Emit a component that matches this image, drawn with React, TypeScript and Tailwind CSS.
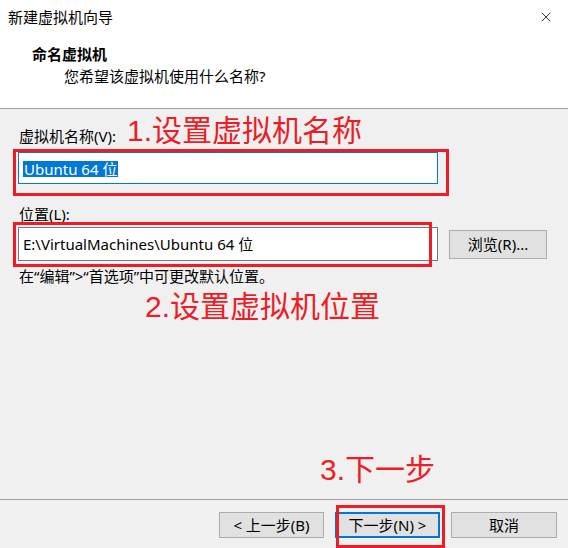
import { X } from 'lucide-react';

const ui = "font-['Noto_Sans','Noto_Sans_CJK_SC',sans-serif]";
const note = "font-['Liberation_Sans','Noto_Sans_CJK_SC',sans-serif] text-[30px] leading-[30px] text-[#ee1c25]";

function RedBox({ className }: { className: string }) {
  return <div className={`pointer-events-none absolute border-[3px] border-[#ee1c25] ${className}`} />;
}

function WizardButton({ label, className }: { label: string; className: string }) {
  return (
    <button className={`h-[26px] bg-[#e1e1e1] text-[15px] leading-[20px] text-black ${className}`}>{label}</button>
  );
}

export default function App() {
  return (
    <div className={`${ui} flex h-[548px] w-[568px] flex-col overflow-hidden bg-[#f0f0f0] text-black`}>
      {/* header */}
      <div className="h-[109px] shrink-0 border-b border-[#a0a0a0] bg-white">
        <div className="flex h-[34px] items-center justify-between pl-[8px] pr-[14px]">
          <span className="text-[15px] leading-[20px]">新建虚拟机向导</span>
          <X size={16} strokeWidth={1.2} />
        </div>
        <div className="mt-[10px] pl-[32px] text-[15px] font-bold leading-[20px]">命名虚拟机</div>
        <div className="mt-[2px] pl-[64px] text-[15px] leading-[20px]">您希望该虚拟机使用什么名称?</div>
      </div>

      {/* body */}
      <div className="flex-1">
        <div className="mt-[3px] flex h-[32px] pl-[19px]">
          <span className="mt-[14px] w-[108px] text-[15px] leading-[20px]">虚拟机名称(V):</span>
          <span className={`mt-[4px] ${note}`}>1.设置虚拟机名称</span>
        </div>

        <div className="relative ml-[18px] mt-[8px] h-[32px] w-[420px] border border-[#0078d7] bg-white pl-[4px] pt-[4px]">
          <span className="inline-block bg-[#0078d7] px-[1px] text-[15px] leading-[16px] text-white">Ubuntu 64 位</span>
          <RedBox className="-left-[6px] -top-[4px] h-[47px] w-[436px]" />
        </div>

        <div className="mt-[20px] pl-[19px] text-[15px] leading-[20px]">位置(L):</div>

        <div className="ml-[18px] mt-[3px] flex items-center gap-[11px]">
          <div className="relative flex h-[34px] w-[420px] items-center border border-[#7a7a7a] bg-white pl-[4px] text-[15px] leading-[20px]">
            E:\VirtualMachines\Ubuntu 64 位
            <RedBox className="-left-[6px] -top-[6px] h-[45px] w-[419px]" />
          </div>
          <button className="h-[29px] w-[98px] border border-[#adadad] bg-[#e1e1e1] text-[15px] leading-[20px]">
            浏览(R)...
          </button>
        </div>

        <div className="mt-[5px] pl-[19px] text-[15px] leading-[20px]">在“编辑”&gt;“首选项”中可更改默认位置。</div>

        <div className={`mt-[6px] pl-[145px] ${note}`}>2.设置虚拟机位置</div>

        <div className={`mt-[133px] pl-[320px] ${note}`}>3.下一步</div>
      </div>

      {/* footer */}
      <div className="flex h-[49px] shrink-0 items-start justify-end gap-[11px] border-t border-[#a0a0a0] pr-[11px] pt-[12px]">
        <WizardButton label="< 上一步(B)" className="w-[105px] border border-[#adadad]" />
        <div className="relative">
          <WizardButton label="下一步(N) >" className="w-[105px] border-2 border-[#0078d7]" />
          <RedBox className="left-[1px] -top-[7px] h-[43px] w-[109px]" />
        </div>
        <WizardButton label="取消" className="w-[106px] border border-[#adadad]" />
      </div>
    </div>
  );
}
